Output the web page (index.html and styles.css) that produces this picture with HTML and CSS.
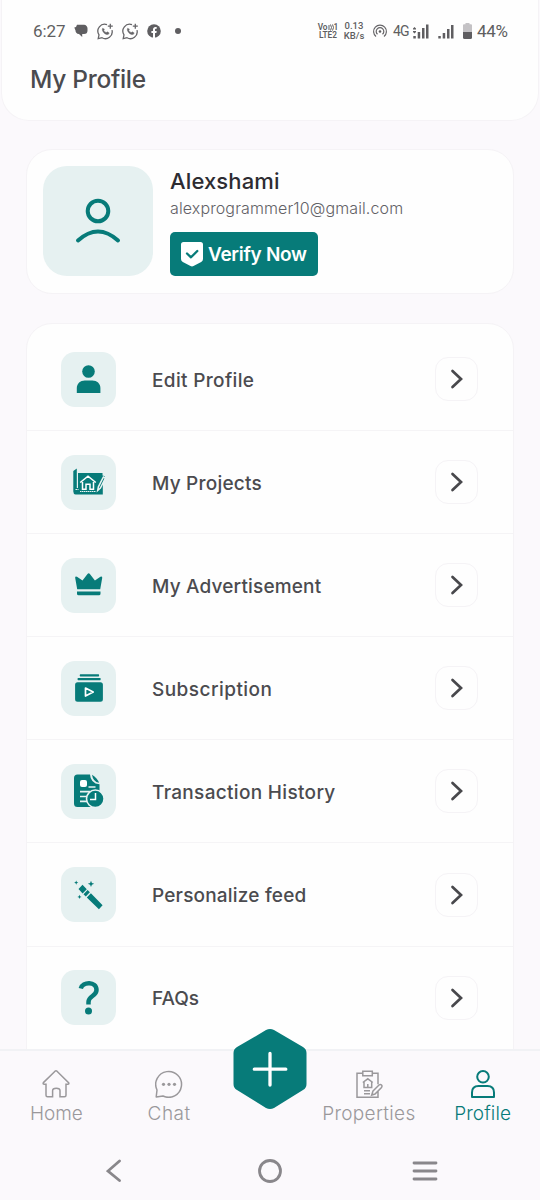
FILE: index.html
```html
<!DOCTYPE html>
<html lang="en">
<head>
<meta charset="utf-8">
<title>My Profile</title>
<link rel="stylesheet" href="styles.css">
</head>
<body>
<div class="screen">
  <header class="header">
    <div class="status">
      <span class="clock">6:27</span>
      <svg class="s-msg" width="14" height="14" viewBox="0 0 14 14"><path d="M3 .8h7a3.500 3.500 0 0 1 3.500 3.700v2A3.500 3.500 0 0 1 10 10H8.200v3L5 10C2.500 10 1.500 8 1.500 6.500L.3 3.500 2 3z" fill="#5f5e61"/></svg>
      <svg class="s-wa" width="17" height="17" viewBox="0 0 17 17" fill="none" stroke="#666568" stroke-width="1.300"><path d="M10 1.700A6.800 6.800 0 0 0 2 11.800L1.200 15.600 5 14.700A6.800 6.800 0 0 0 15 7.200M13.300.7v5M10.800 3.200h5"/><path d="M5.600 5.200c-1.600 2.600 3 7.400 5.800 6.100l.8-1.400-1.900-1.100-1 .8C8 9.100 7.200 8.200 6.700 7.200l.8-1z" fill="#666568" stroke-width=".4"/></svg>
      <svg class="s-wa2" width="17" height="17" viewBox="0 0 17 17" fill="none" stroke="#666568" stroke-width="1.300"><path d="M10 1.700A6.800 6.800 0 0 0 2 11.800L1.200 15.600 5 14.700A6.800 6.800 0 0 0 15 7.200M13.300.7v5M10.800 3.200h5"/><path d="M5.600 5.200c-1.600 2.600 3 7.400 5.800 6.100l.8-1.400-1.900-1.100-1 .8C8 9.100 7.200 8.200 6.700 7.200l.8-1z" fill="#666568" stroke-width=".4"/></svg>
      <svg class="s-fb" width="14" height="14" viewBox="0 0 14 14"><circle cx="7" cy="7" r="6.800" fill="#5f5e61"/><path d="M6 14V9H4.400V7H6V5.500C6 3.900 7 3 8.400 3h1.300v1.800h-.9c-.6 0-.8.3-.8.800V7h1.700l-.3 2H8v5z" fill="#fefefe"/></svg>
      <i class="s-dot"></i>
      <span class="spacer"></span>
      <span class="tiny lte"><b>Vo<svg width="6" height="7" viewBox="0 0 6 7" fill="none" stroke="#5f5e61"><path d="M1 1v5M2.500.5q2 3 0 6M4.500.5q2 3 0 6"/></svg>1</b><b>LTE2</b></span>
      <span class="tiny rate"><b>0.13</b><b>KB/s</b></span>
      <svg class="s-hot" width="16" height="14" viewBox="0 0 16 14" fill="none" stroke="#666568" stroke-width="1.200"><path d="M4 12.500a6.400 6.400 0 1 1 8 0M5.500 10.300a3.800 3.800 0 1 1 5 0"/><circle cx="8" cy="7.500" r="1.300" fill="#5f5e61" stroke="none"/></svg>
      <span class="net">4G</span>
      <svg class="s-sig" width="16" height="15" viewBox="0 0 16 15" fill="#5f5e61"><path d="M0 4.500 1.500 3 3 4.500v1H0zM0 7h3v1L1.500 9.500 0 8zM.3 12h2.500v2.500H.3zM4.700 8h2.500v6.500H4.700zM9 4h2.500v10.500H9zM13 .5h2.500v14H13z"/></svg>
      <svg class="s-sig2" width="16" height="15" viewBox="0 0 16 15" fill="#5f5e61"><path d="M.3 12h2.500v2.500H.3zM4.700 9h2.500v5.500H4.700zM9 5h2.500v9.500H9zM13 1h2.500v13.500H13z"/></svg>
      <svg class="s-bat" width="9" height="16" viewBox="0 0 9 16"><path d="M2.500 0h4v1.200H8q1 0 1 1V9H0V2.200q0-1 1-1h1.500z" fill="#c4c2c5"/><path d="M0 9h9v5.500q0 1.500-1.500 1.500h-6Q0 16 0 14.500z" fill="#5f5e61"/></svg>
      <span class="pct">44%</span>
    </div>
    <h1 class="title">My Profile</h1>
  </header>

  <main class="content">
    <section class="user-card">
      <div class="avatar">
        <svg width="46" height="46" viewBox="0 0 46 46" fill="none" stroke="#077b79" stroke-width="4" stroke-linecap="round"><circle cx="23" cy="13" r="10.300"/><path d="M3 42.500Q23 24.500 43 42.500"/></svg>
      </div>
      <div class="user-info">
        <div class="name">Alexshami</div>
        <div class="email">alexprogrammer10@gmail.com</div>
        <button class="verify">
          <svg width="22" height="25" viewBox="0 0 22 25"><path d="M2.500 0h17Q22 0 22 2.500V17q0 2-1.800 3L12.500 24q-1.500.8-3 0L1.800 20Q0 19 0 17V2.500Q0 0 2.500 0z" fill="#fff"/><path d="m6 11.500 4 3.800L16.300 9" fill="none" stroke="#077b79" stroke-width="2.300" stroke-linecap="round" stroke-linejoin="round"/></svg>
          <span>Verify Now</span>
        </button>
      </div>
    </section>

    <section class="menu">
      <div class="row">
        <span class="tile"><svg width="34" height="34" viewBox="0 0 34 34" fill="#077b79"><circle cx="16.500" cy="9.500" r="6.300"/><path d="M4.800 31V26c0-4.500 3.500-7.500 8-7.500h7.600c4.500 0 8 3 8 7.500v5z"/></svg></span>
        <span class="label l1">Edit Profile</span>
        <span class="go"><svg width="14" height="20" viewBox="0 0 14 20"><path d="m2.500 2 8.500 8-8.500 8"/></svg></span>
      </div>
      <div class="row">
        <span class="tile"><svg width="34" height="34" viewBox="0 0 34 34" fill="#077b79"><path d="M1.300 6 4.800 3.500V23H6V8h24.500v2.500L33 11.200l-2.200 4V29.500H3.500Q1.300 29 1.300 26.500z"/><path d="M8 26.500h16M3.500 24.500h3" stroke="#e9f3f3" stroke-width="1" stroke-dasharray="1.500 .5"/><path d="m8.200 17.500 7.800-6.300 7.800 6.300M10.500 17v7.200h3.500v-5h4v5h3.500V17" fill="none" stroke="#fff" stroke-width="1.500"/><path d="m25.700 25.500.7-3.700 5-9.800 2 1-5 10z" stroke="#e9f3f3" stroke-width="1.500"/></svg></span>
        <span class="label l2">My Projects</span>
        <span class="go"><svg width="14" height="20" viewBox="0 0 14 20"><path d="m2.500 2 8.500 8-8.500 8"/></svg></span>
      </div>
      <div class="row">
        <span class="tile"><svg width="34" height="34" viewBox="0 0 34 34" fill="#077b79"><path d="M5.200 21.300 3.200 10q-.3-2.400 1.800-1.200l5.500 3.700 5-6.500q1.200-1.400 2.400 0l5 6.500 5.500-3.700q2.100-1.200 1.800 1.200l-2 11.300zM5 23.500h23.500v2.200q0 1.600-1.600 1.600H6.600Q5 27.300 5 25.700z"/></svg></span>
        <span class="label l3">My Advertisement</span>
        <span class="go"><svg width="14" height="20" viewBox="0 0 14 20"><path d="m2.500 2 8.500 8-8.500 8"/></svg></span>
      </div>
      <div class="row">
        <span class="tile"><svg width="34" height="34" viewBox="0 0 34 34" fill="#077b79"><path d="M8.200 3.200h18.500q1 1 0 2.200H8.200q-1.200-1.200 0-2.200zM6 7h22.300q1 1 0 2.200H6Q4.700 8 6 7zM5.600 11.200h22.800q2.500 0 2.500 2.500v14.600q0 2.500-2.500 2.500H5.600q-2.500 0-2.500-2.500V13.700q0-2.500 2.500-2.500z"/><path d="m13.500 17 7.700 4-7.700 4z" fill="none" stroke="#fff" stroke-width="1.700" stroke-linejoin="round"/></svg></span>
        <span class="label l4">Subscription</span>
        <span class="go"><svg width="14" height="20" viewBox="0 0 14 20"><path d="m2.500 2 8.500 8-8.500 8"/></svg></span>
      </div>
      <div class="row">
        <span class="tile"><svg width="34" height="36" viewBox="0 0 34 36" fill="#077b79"><path d="M5.500 1.500H18q.5 9 9.500 9.800V34H5.500Q2 34 2 30.500V5q0-3.500 3.500-3.500z"/><path d="M20 1.700q5.500 3.500 7 8-6-1-7-8z"/><rect x="8" y="7" width="7" height="7" rx="2" fill="#fff"/><path d="M16.500 14h7M8 18.700h10M8 23.500h7M8 28.300h8" fill="none" stroke="#e9f3f3" stroke-width="1.700"/><circle cx="23.300" cy="25.800" r="8.800" stroke="#e9f3f3" stroke-width="1.600"/><path d="M23.500 20v6.500H18" fill="none" stroke="#fff" stroke-width="1.500"/></svg></span>
        <span class="label l5">Transaction History</span>
        <span class="go"><svg width="14" height="20" viewBox="0 0 14 20"><path d="m2.500 2 8.500 8-8.500 8"/></svg></span>
      </div>
      <div class="row">
        <span class="tile"><svg width="34" height="34" viewBox="0 0 34 34" fill="#077b79"><path d="m6.500 11 4-4.200 4.300 4.400-4.200 4.300zM11.500 16.300l4.100-4.300 2.300 2.200-4.100 4.300zM14.800 19.500l4.100-4.200 11.700 12-3.700 4zM19 2.700l.9 2.200 2.300.9-2.300.9L19 9l-.9-2.300-2.300-.9 2.300-.9zM4.200 2.500l.6 1.500 1.500.6-1.500.6-.6 1.500-.6-1.500-1.500-.6 1.500-.6zM7.500 16.800l.6 1.500 1.500.6-1.500.6-.6 1.500-.6-1.500-1.500-.6 1.500-.6z"/></svg></span>
        <span class="label l6">Personalize feed</span>
        <span class="go"><svg width="14" height="20" viewBox="0 0 14 20"><path d="m2.500 2 8.500 8-8.500 8"/></svg></span>
      </div>
      <div class="row">
        <span class="tile"><svg width="34" height="36" viewBox="0 0 34 36" fill="none" stroke="#077b79" stroke-width="4.500"><path d="M8.800 8.500C10.500 1.500 24.500 1 24.500 10c0 6.500-8 5.500-8 12v2.500"/><circle cx="16.500" cy="31" r="3.500" fill="#077b79" stroke="none"/></svg></span>
        <span class="label l7">FAQs</span>
        <span class="go"><svg width="14" height="20" viewBox="0 0 14 20"><path d="m2.500 2 8.500 8-8.500 8"/></svg></span>
      </div>
    </section>
  </main>

  <nav class="tabs">
    <a class="tab">
      <svg width="28" height="28" viewBox="0 0 28 28"><path d="M1.400 12.600 13 1.200q1-.8 2 0l11.600 11.400q.8 1.500-.9 1.700H24v11q0 1.500-1.500 1.500H18v-6q0-2.500-3.700-2.500t-3.700 2.500v6H5.500Q4 26.800 4 25.300v-11H2.300q-1.700-.2-.9-1.700z"/></svg>
      <span class="t1">Home</span>
    </a>
    <a class="tab">
      <svg width="28" height="28" viewBox="0 0 28 28"><path d="M1.200 27 2 20A12.900 12.900 0 1 1 8 26z" stroke-linejoin="round"/><g fill="#9a989b" stroke="none"><circle cx="8.500" cy="14.300" r="1.600"/><circle cx="14" cy="14.300" r="1.600"/><circle cx="19.500" cy="14.300" r="1.600"/></g></svg>
      <span class="t2">Chat</span>
    </a>
    <a class="add"><svg width="74" height="82" viewBox="0 0 74 82"><path d="M33 2.100q4-2 8 0l29 17q3.500 2 3.500 6v31q0 4-3.500 6L41 79.900q-4 2-8 0L4 62.100q-3.500-2-3.500-6v-31q0-4 3.500-6z" fill="#077b79"/><path d="M37 25.500v31.500M21.300 41.200h31.500" stroke="#fff" stroke-width="3.300" stroke-linecap="round"/></svg></a>
    <a class="tab">
      <svg width="28" height="28" viewBox="0 0 28 28"><path d="M8 3.300H2v24h21v-6M17 3.300h6v11M7.800 1.200h9.500v4.600H7.800zM7.800 12.500l5-3.700 5 3.700M9 12v5.500h7.700V12M12.800 17v-3M9 20.700h6M9 23.700h6M18 21l6-6q1.500-1 2.500 0t0 2.500L20 24l-3.300 1z"/></svg>
      <span class="t3">Properties</span>
    </a>
    <a class="tab active">
      <svg width="28" height="28" viewBox="0 0 28 28"><circle cx="14" cy="6.800" r="5.800"/><path d="M3 27v-4.500q0-6.500 6.500-6.500h9q6.500 0 6.500 6.500V27z" stroke-linejoin="round"/></svg>
      <span class="t4">Profile</span>
    </a>
  </nav>
  <div class="sysnav">
    <svg width="16" height="24" viewBox="0 0 16 24"><path d="M13.500 2 2 12l11.500 9.500"/></svg>
    <svg class="sys-home" width="26" height="26" viewBox="0 0 26 26"><circle cx="13" cy="13" r="10.500"/></svg>
    <svg width="26" height="22" viewBox="0 0 26 22"><path d="M2 3h22M2 11h22M2 19h22"/></svg>
  </div>
</div>
</body>
</html>
```

FILE: styles.css
```css
* { box-sizing: border-box; }
body { margin: 0; background: #fbf9fc; font-family: Inter, "Open Sans", sans-serif; }
.screen { width: 540px; height: 1200px; display: flex; flex-direction: column; overflow: hidden; }
svg { display: block; flex: none; }
.spacer { flex: 1; }

.header { height: 121px; margin: 0 1px; flex: none; background: #fefefe; border: 1px solid #f5f3f6; border-top: 0; border-radius: 0 0 28px 28px; }
.status { display: flex; align-items: center; height: 62px; padding: 0 29px 0 31px; font-family: Roboto, sans-serif; color: #5f5e61; font-size: 17px; }
.clock { width: 34px; letter-spacing: -.1px; }
.s-msg { margin-left: 7px; }
.s-wa { margin-left: 9px; }
.s-wa2 { margin-left: 8px; }
.s-fb { margin-left: 8px; }
.s-dot { width: 6px; height: 6px; margin-left: 14px; border-radius: 50%; background: #5f5e61; }
.tiny { display: flex; flex-direction: column; font-size: 9.500px; line-height: 10px; }
.tiny b { display: flex; align-items: center; justify-content: center; font-weight: 500; }
.lte { width: 20px; font-size: 8.300px; }
.lte b { font-weight: 600; line-height: 8px; }
.rate { width: 20px; margin-left: 6px; }
.s-hot { margin-left: 8px; }
.net { width: 16px; margin-left: 5px; font-size: 14px; letter-spacing: -.8px; }
.s-sig { margin-left: 4px; }
.s-sig2 { margin-left: 9px; }
.s-bat { margin-left: 9px; }
.pct { width: 32px; margin-left: 5px; white-space: nowrap; letter-spacing: -.35px; }
.title { margin: 0; padding: 1px 0 0 28px; font-size: 24.500px; line-height: 32px; font-weight: 450; color: #4b4b4f; letter-spacing: -.3px; }

.content { flex: none; height: 928px; padding: 28px 26px 0; overflow: hidden; }
.user-card { display: flex; height: 145px; padding: 16px; background: #fefefe; border: 1px solid #f5f3f6; border-radius: 26px; }
.avatar { width: 110px; height: 110px; flex: none; display: grid; place-items: center; border-radius: 24px; background: #e6f1f1; }
.user-info { margin-left: 17px; }
.name { font-size: 22px; line-height: 30px; font-weight: 550; color: #2d2c32; letter-spacing: .13px; }
.email { font-size: 16px; line-height: 24px; font-weight: 350; color: #626166; letter-spacing: .12px; }
.verify { width: 148px; height: 44px; margin: 12px 0 0; padding: 0 0 0 11px; display: flex; align-items: center; gap: 5px; border: 0; border-radius: 5px; background: #077b79; color: #fff; font: 600 19px Inter, sans-serif; letter-spacing: -.3px; white-space: nowrap; }

.menu { height: 740px; margin-top: 29px; padding-top: 4px; background: #fefefe; border: 1px solid #f5f3f6; border-radius: 26px 26px 0 0; }
.row { height: 103.100px; display: flex; align-items: center; padding: 0 35px 0 34px; border-bottom: 1.500px solid #f5f4f6; }
.tile { width: 55px; height: 55px; display: grid; place-items: center; border-radius: 14px; background: #e6f1f1; }
.label { flex: 1; margin-left: 36px; padding-top: 2px; font-size: 19px; font-weight: 500; color: #4b4b4f; white-space: nowrap; }
.l1 { letter-spacing: .34px; }
.l2 { letter-spacing: .22px; }
.l3 { letter-spacing: .17px; }
.l4 { letter-spacing: .46px; }
.l5 { letter-spacing: .32px; }
.l6 { letter-spacing: .19px; }
.go { width: 43px; height: 44px; display: grid; place-items: center; border: 1.500px solid #f5f3f6; border-radius: 13px; }
.go path { fill: none; stroke: #48484c; stroke-width: 2.700; stroke-linecap: round; }

.tabs { position: relative; display: flex; flex: none; height: 92px; padding: 0; border-top: 2px solid #f1f2f5; }
.tab { display: flex; flex-direction: column; align-items: center; width: 113px; padding-top: 19px; gap: 4px; font-size: 19px; font-weight: 300; line-height: 24px; color: #9a989b; }
.tab svg { fill: none; stroke: #9a989b; stroke-width: 1.500; }
.tab.active { width: 115px; color: #077b79; }
.tab.active svg { stroke: #077b79; stroke-width: 2; }
.tab:nth-child(4) { margin-left: 87px; }
.t2 { letter-spacing: .5px; }
.t3 { letter-spacing: .32px; }
.t4 { letter-spacing: .12px; }
.add { position: absolute; left: 233px; top: -23px; }

.sysnav { flex: 1; display: flex; align-items: center; padding-left: 106px; }
.sysnav svg { fill: none; stroke: #89878b; stroke-width: 2.800; stroke-linecap: round; }
.sysnav .sys-home { margin: 0 129px 0 135px; }
```
